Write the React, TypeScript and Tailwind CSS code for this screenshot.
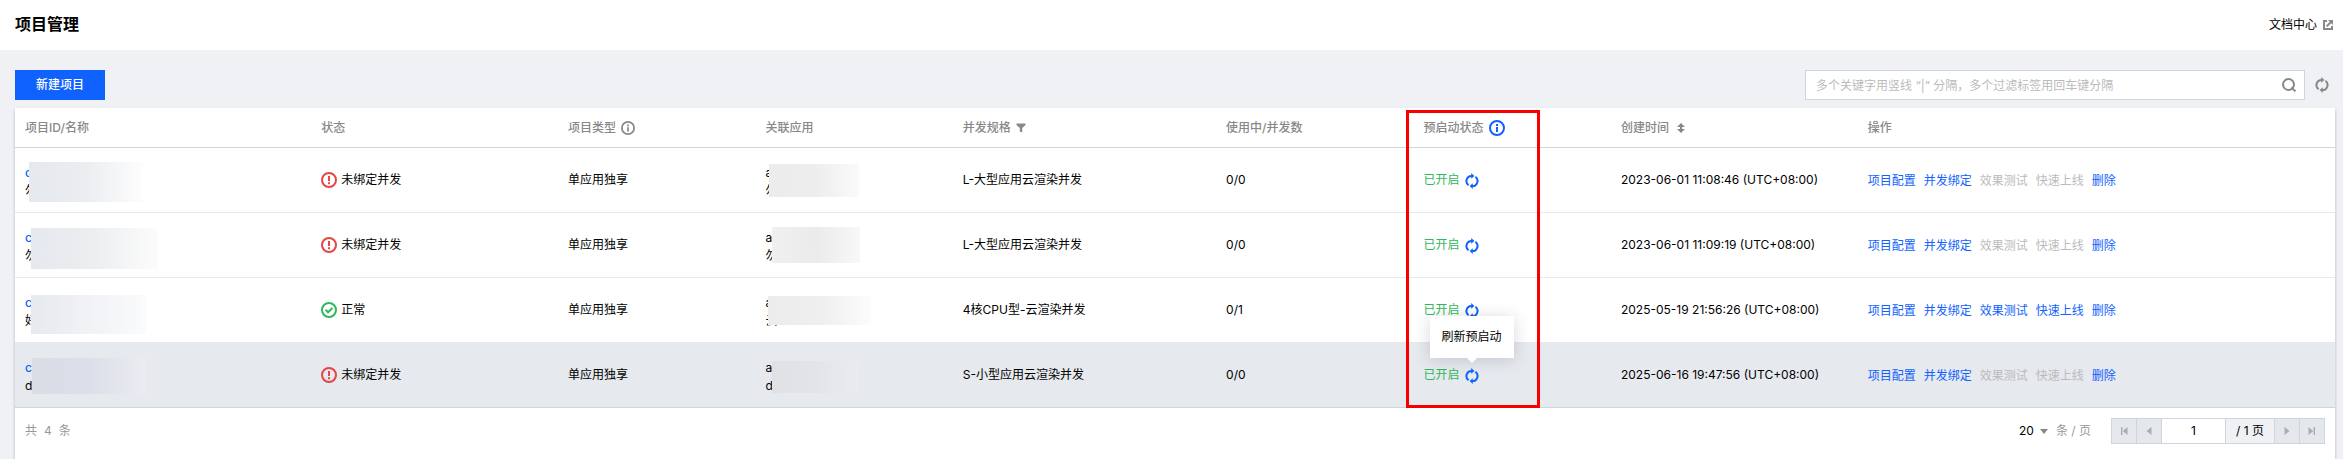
import { useState, type ReactNode } from 'react';
import clsx from 'clsx';

type Mask = { pos: string; tone: string };

interface Project {
    id: string;
    name: string;
    idMask: Mask;
    app: string;
    appName: string;
    appMask: Mask;
    bound: boolean;
    spec: string;
    usage: string;
    created: string;
}

const projects: Project[] = [
    {
        id: 'c', name: '勿',
        idMask: { pos: 'left-1 top-0.5 w-[113px] h-10', tone: 'from-[#e5e8ed] via-[#ebedf1] to-[#fdfdfd]' },
        app: 'a', appName: '勿',
        appMask: { pos: 'left-1 top-1 w-[90px] h-[33px]', tone: 'from-[#ececec] via-[#ededed] to-[#fafafa]' },
        bound: false, spec: 'L-大型应用云渲染并发', usage: '0/0', created: '2023-06-01 11:08:46 (UTC+08:00)',
    },
    {
        id: 'c', name: '勿',
        idMask: { pos: 'left-1.5 top-[3px] w-[127px] h-[41px]', tone: 'from-[#e5e8ee] via-[#eceef0] to-[#fcfcfc]' },
        app: 'ap', appName: '勿',
        appMask: { pos: 'left-[7px] top-0.5 w-[88px] h-9', tone: 'from-[#f0f0f0] via-[#ebebeb] to-[#f8f8f8]' },
        bound: false, spec: 'L-大型应用云渲染并发', usage: '0/0', created: '2023-06-01 11:09:19 (UTC+08:00)',
    },
    {
        id: 'c', name: '好',
        idMask: { pos: 'left-1.5 top-[5px] w-[115px] h-[39px]', tone: 'from-[#e6e9ee] via-[#f1f2f6] to-[#fafbfc]' },
        app: 'a', appName: '云',
        appMask: { pos: 'left-[3px] top-1.5 w-[103px] h-[29px]', tone: 'from-[#ececec] via-[#efefef] to-[#fcfcfc]' },
        bound: true, spec: '4核CPU型-云渲染并发', usage: '0/1', created: '2025-05-19 21:56:26 (UTC+08:00)',
    },
    {
        id: 'ca', name: 'd',
        idMask: { pos: 'left-[7px] top-[3px] w-[115px] h-9', tone: 'from-[#d9dde6] via-[#dcdfe9] to-[#ebecf1]' },
        app: 'a', appName: 'd',
        appMask: { pos: 'left-[7px] top-1.5 w-[86px] h-8', tone: 'from-[#dfe1e5] via-[#e2e4e8] to-[#e9ebef]' },
        bound: false, spec: 'S-小型应用云渲染并发', usage: '0/0', created: '2025-06-16 19:47:56 (UTC+08:00)',
    },
];

function InfoIcon({ className }: { className?: string }) {
    return (
        <svg viewBox="0 0 16 16" className={className} fill="none" stroke="currentColor" strokeWidth="2">
            <circle cx="8" cy="8" r="7" />
            <path d="M8 7v5M8 4v2" />
        </svg>
    );
}

function RefreshIcon({ className }: { className?: string }) {
    return (
        <svg viewBox="1 0 14 16" className={className} fill="none" stroke="currentColor" strokeWidth="2">
            <path d="M4.6 12.3A5.2 5.2 0 0 1 7.8 2.9M11.4 3.7A5.2 5.2 0 0 1 8.2 13.1" />
            <path d="M7.2 0l3.2 2.9-3.2 2.9zM8.8 10.2l-3.2 2.9L8.8 16z" fill="currentColor" stroke="none" />
        </svg>
    );
}

function StatusIcon({ ok }: { ok: boolean }) {
    return (
        <svg viewBox="0 0 16 16" className={clsx('size-4', ok ? 'text-[#2fb85c]' : 'text-[#e54545]')} fill="none" stroke="currentColor" strokeWidth="2">
            <circle cx="8" cy="8" r="7" />
            {ok ? <path d="M4.6 7.8l2.5 2.5 4.4-4.4" /> : <path d="M8 4v5M8 10.2v2" />}
        </svg>
    );
}

function Masked({ first, second, mask, link }: { first: string; second: string; mask: Mask; link?: boolean }) {
    return (
        <div className="relative pt-1 leading-[18px]">
            {link ? <a href="#detail" className="block font-medium text-[#1062fe]">{first}</a> : <p>{first}</p>}
            <p>{second}</p>
            <span className={clsx('absolute bg-linear-to-r', mask.pos, mask.tone)} />
        </div>
    );
}

function Action({ disabled, children }: { disabled?: boolean; children: ReactNode }) {
    return (
        <button disabled={disabled} className="text-[#1062fe] disabled:text-[#bbb]">
            {children}
        </button>
    );
}

function PageButton({ label, d }: { label: string; d: string }) {
    return (
        <button disabled aria-label={label} className="-ml-px flex w-[26px] items-center justify-center border border-[#cfd5de] bg-[#e4e7eb] text-[#a9adb5]">
            <svg viewBox="0 0 8 8" className="size-2" fill="currentColor"><path d={d} /></svg>
        </button>
    );
}

export default function App() {
    const [keyword, setKeyword] = useState('');
    const [page, setPage] = useState('1');

    return (
        <div className="flex min-h-screen flex-col bg-[#eff1f5] font-[Inter,'Noto_Sans_CJK_SC',sans-serif] text-xs text-black">
            <header className="flex h-[50px] items-center justify-between bg-white pr-2.5 pl-[15px]">
                <h1 className="pb-0.5 text-base font-bold">项目管理</h1>
                <a href="#docs" className="flex items-center gap-1.5">
                    文档中心
                    <svg viewBox="0 0 10 10" className="size-2.5 text-[#888]" fill="none" stroke="currentColor" strokeWidth="2">
                        <path d="M4 1H1v8h8V6M3.6 6.4L8 2" />
                        <path d="M5 0h5v5z" fill="currentColor" stroke="none" />
                    </svg>
                </a>
            </header>

            <main className="flex grow flex-col px-[15px] pt-5 pr-2">
                <div className="mb-2 flex h-[30px] items-center justify-between">
                    <button className="h-full w-[90px] bg-[#1062fe] font-medium text-white">新建项目</button>
                    <div className="flex h-full items-center gap-2.5 pr-1.5">
                        <label className="flex h-full w-[500px] items-center border border-[#cfd5de] bg-white pr-2 pl-2.5">
                            <input
                                value={keyword}
                                onChange={(e) => setKeyword(e.target.value)}
                                aria-label="搜索"
                                placeholder="多个关键字用竖线 “|” 分隔，多个过滤标签用回车键分隔"
                                className="grow pt-0.5 outline-none placeholder:text-[#bbb]"
                            />
                            <svg viewBox="0 0 14 14" className="size-3.5 text-[#888]" fill="none" stroke="currentColor" strokeWidth="2">
                                <circle cx="6.5" cy="6.5" r="5.5" />
                                <path d="M9.4 9.4l4 4" />
                            </svg>
                        </label>
                        <button aria-label="刷新"><RefreshIcon className="h-4 w-3.5 text-[#888]" /></button>
                    </div>
                </div>

                <section className="flex grow flex-col bg-white shadow-[0_2px_3px_rgba(54,58,80,0.32)]">
                    <table className="w-full table-fixed border-separate border-spacing-0 text-left [&_td]:px-2.5 [&_th]:px-2.5">
                        <colgroup>
                            <col className="w-[180px]" />
                            <col className="w-[150px]" />
                            <col className="w-[120px]" />
                            <col className="w-[120px]" />
                            <col className="w-[160px]" />
                            <col className="w-[120px]" />
                            <col className="w-[120px]" />
                            <col className="w-[150px]" />
                            <col className="w-[290px]" />
                        </colgroup>
                        <thead className="text-[#888]">
                            <tr className="h-10 [&>th]:border-b [&>th]:border-[#cfd5de] [&>th]:font-medium">
                                <th>项目ID/名称</th>
                                <th>状态</th>
                                <th><span className="flex items-center gap-[5px]">项目类型 <InfoIcon className="size-3.5" /></span></th>
                                <th>关联应用</th>
                                <th>
                                    <span className="flex items-center gap-[5px]">
                                        并发规格
                                        <svg viewBox="0 0 10 10" className="size-2.5" fill="currentColor"><path d="M.5.5h9v1.4L6.2 5v4.6L3.8 8.4V5L.5 1.9z" /></svg>
                                    </span>
                                </th>
                                <th>使用中/并发数</th>
                                <th className="relative">
                                    <span className="flex items-center gap-[5px]">预启动状态 <InfoIcon className="size-4 text-[#1062fe]" /></span>
                                    <span className="pointer-events-none absolute top-0.5 -left-2 z-20 h-[298px] w-[134px] border-3 border-[#f80000]" />
                                </th>
                                <th>
                                    <span className="flex items-center gap-2">
                                        创建时间
                                        <svg viewBox="0 0 8 10" className="h-2.5 w-2" fill="currentColor"><path d="M4 0l4 4H5v2h3l-4 4-4-4h3V4H0z" /></svg>
                                    </span>
                                </th>
                                <th>操作</th>
                            </tr>
                        </thead>
                        <tbody>
                            {projects.map((p, i) => {
                                const last = i === projects.length - 1;
                                return (
                                    <tr key={p.created} className={clsx('h-[65px] [&>td]:border-b', last ? 'bg-[#e6e9ee] [&>td]:border-[#cfd5de]' : '[&>td]:border-[#e6e9ee]')}>
                                        <td><Masked first={p.id} second={p.name} mask={p.idMask} link /></td>
                                        <td>
                                            <span className="flex items-center gap-1">
                                                <StatusIcon ok={p.bound} /> {p.bound ? '正常' : '未绑定并发'}
                                            </span>
                                        </td>
                                        <td>单应用独享</td>
                                        <td><Masked first={p.app} second={p.appName} mask={p.appMask} /></td>
                                        <td>{p.spec}</td>
                                        <td>{p.usage}</td>
                                        <td>
                                            <span className="flex items-center gap-[5px] text-[#2fb85c]">
                                                已开启
                                                <button aria-label="刷新预启动" className="relative pt-0.5 text-[#1062fe]">
                                                    <RefreshIcon className="h-4 w-3.5" />
                                                    {last && (
                                                        <span role="tooltip" className="absolute bottom-full left-1/2 z-10 mb-2 -translate-x-1/2 bg-white px-3 py-[13px] whitespace-nowrap text-black shadow-[0_2px_16px_rgba(54,58,80,0.2)]">
                                                            刷新预启动
                                                            <span className="absolute top-full left-1/2 -translate-x-1/2 border-5 border-b-0 border-transparent border-t-white" />
                                                        </span>
                                                    )}
                                                </button>
                                            </span>
                                        </td>
                                        <td>{p.created}</td>
                                        <td>
                                            <span className="flex gap-2 pt-0.5">
                                                <Action>项目配置</Action>
                                                <Action>并发绑定</Action>
                                                <Action disabled={!p.bound}>效果测试</Action>
                                                <Action disabled={!p.bound}>快速上线</Action>
                                                <Action>删除</Action>
                                            </span>
                                        </td>
                                    </tr>
                                );
                            })}
                        </tbody>
                    </table>

                    <footer className="flex items-center justify-between px-2.5 py-2.5">
                        <p className="flex gap-[7px] text-[#999]"><span>共</span><span>4</span><span>条</span></p>
                        <div className="flex items-center gap-5">
                            <label className="flex items-center gap-2 text-[#999]">
                                <span className="flex items-center gap-1.5">
                                    <select aria-label="每页条数" className="appearance-none text-black outline-none">
                                        <option>20</option>
                                        <option>50</option>
                                    </select>
                                    <svg viewBox="0 0 8 5" className="h-[5px] w-2 text-[#888]" fill="currentColor"><path d="M0 0h8L4 5z" /></svg>
                                </span>
                                条 / 页
                            </label>
                            <nav className="flex h-[26px] pl-px">
                                <PageButton label="首页" d="M1 0h1.4v8H1zM7.5 0v8L2.8 4z" />
                                <PageButton label="上一页" d="M6.5 0v8L1.5 4z" />
                                <input
                                    value={page}
                                    onChange={(e) => setPage(e.target.value)}
                                    aria-label="页码"
                                    className="-ml-px w-[65px] border border-[#cfd5de] text-center outline-none"
                                />
                                <span className="-ml-px flex w-[50px] items-center justify-center border border-[#cfd5de] bg-[#eff1f5]">/ 1 页</span>
                                <PageButton label="下一页" d="M1.5 0v8l5-4z" />
                                <PageButton label="末页" d="M5.6 0H7v8H5.6zM.5 0v8l4.7-4z" />
                            </nav>
                        </div>
                    </footer>
                </section>
            </main>
        </div>
    );
}
